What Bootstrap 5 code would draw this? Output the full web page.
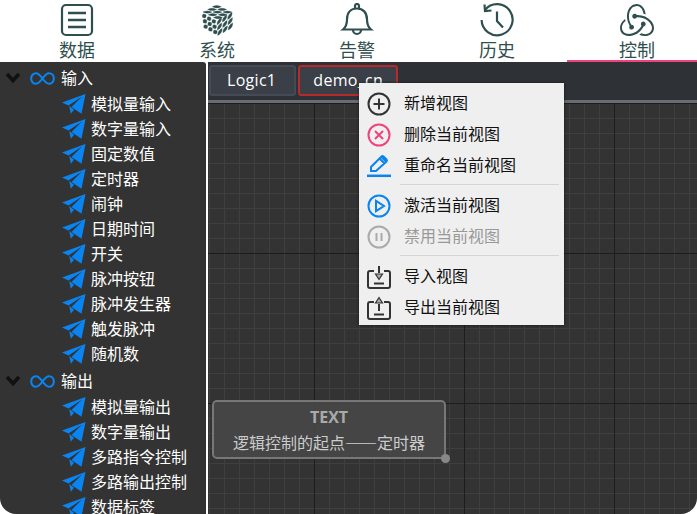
<!DOCTYPE html>
<html lang="zh">
<head>
<meta charset="utf-8">
<title>控制</title>
<link rel="stylesheet" href="https://cdn.jsdelivr.net/npm/bootstrap@5.3.0/dist/css/bootstrap.min.css">
<style>
html,body{height:100%;overflow:hidden;background:#fff}
body{font-family:"Open Sans","Noto Sans CJK SC",sans-serif}
.app-shell{width:697px;height:514px;overflow:hidden}
.top-nav{height:62px;flex:none;padding-left:7px;overflow:hidden}
.top-item{width:140px;flex:none;height:62px;color:#2f4f4f;font-size:18px;line-height:22px;padding-top:3px}
.top-item svg{width:34px;height:34px;display:block;margin-bottom:2px}
.top-item.on{box-shadow:inset 0 -2px 0 #f0437c}
.work-area{height:452px;border-radius:0 0 16px 16px;overflow:hidden}
.side-tree{width:206px;flex:none;background:#333;color:#fff;font-size:16px;line-height:25px;padding-top:2px;overflow:hidden;border-top-right-radius:3px}
.tree-row{height:25px;white-space:nowrap}
.tree-head{padding-left:5px;height:28px;padding-top:1px}
.tree-head .chev{width:16px;height:12px;margin-right:9px;margin-top:-1px}
.tree-head .loop{width:25px;height:13px;margin-right:6px;margin-top:-1px}
.tree-leaf{padding-left:62px}
.tree-leaf svg{width:24px;height:20px;margin-right:5px;flex:none;margin-top:-1px}
.split-line{width:2px;flex:none;background:#fff}
.main-pane{width:489px;min-width:0}
.tab-strip{height:41px;flex:none;background:#2e3136;padding:3px 0 0 1px;gap:2px;border-bottom:3px solid #6a6c70}
.view-tab{height:31px;padding:0 18px 0 16px;background:#3a3f48;border:2px solid #454b55;border-radius:3px;color:#fff;font-size:16px;line-height:27px;letter-spacing:.3px}
.view-tab.cur{border-color:#b52a2a;padding:0 13px}
.canvas-pane{background-color:#333;background-image:linear-gradient(#1d1d1d 1px,transparent 1px),linear-gradient(90deg,#1d1d1d 1px,transparent 1px),linear-gradient(#3f3f3f 1px,transparent 1px),linear-gradient(90deg,#3f3f3f 1px,transparent 1px);background-size:150px 150px,150px 150px,15px 15px,15px 15px;background-position:0 0,-44px 0,0 0,-44px 0}
.node-box{left:4px;top:297px;width:234px;height:59px;background:rgba(72,72,72,.88);border:2px solid #777;border-radius:5px;text-align:center;color:#ccc}
.node-title{font-size:16px;font-weight:700;line-height:20px;margin-top:5px;color:#aaa}
.node-text{font-family:"Noto Sans CJK SC",sans-serif;font-size:16px;line-height:20px;margin-top:5px}
.node-dot{right:-6px;bottom:-6px;width:9px;height:9px;border-radius:50%;background:#888}
.ctx-menu{left:359px;top:83px;width:205px;height:242px;background:#efefef;box-shadow:0 0 3px rgba(0,0,0,.55);padding-top:5px;font-size:16px;line-height:20px;color:#111;z-index:5}
.ctx-row{height:31px;padding-left:8px}
.ctx-row svg{width:24px;height:24px;margin-right:13px;flex:none}
.ctx-label{margin-top:-2px}
.ctx-row.off{color:#999}
.ctx-sep{height:1px;background:#d4d4d4;margin:3px 5px 5px 41px}
</style>
</head>
<body>
<svg width="0" height="0" class="d-block position-fixed">
<defs>
<symbol id="plane" viewBox="0 0 24 20"><path fill="#0a84f0" d="M23.500 0 0 8.500l6.500 3L20 2.500 9.500 13 19.500 19.800z"/><path fill="#0a84f0" d="M7.200 12 8.800 19.800l3.200-4z"/></symbol>
<symbol id="chev" viewBox="0 0 16 12"><path d="M2 2 8 8.500 14 2" fill="none" stroke="#111" stroke-width="3.600"/></symbol>
<symbol id="loop" viewBox="0 0 25 13"><path d="M12.500 6.500C10 3 8.300 1.300 6 1.300 3.200 1.300 1.200 3.600 1.200 6.500s2 5.200 4.800 5.200c2.300 0 4-1.700 6.500-5.200C15 3 16.700 1.300 19 1.300c2.800 0 4.800 2.300 4.800 5.200s-2 5.200-4.800 5.200c-2.300 0-4-1.700-6.500-5.200z" fill="none" stroke="#0a84f0" stroke-width="2.100"/></symbol>
<g id="leaves" fill="#2f4f4f" stroke="#2f4f4f" stroke-width=".06">
<path d="M.06.94Q.06.06.94.06.94.94.06.94z"/><path d="M1.060.94Q1.060.06 1.940.06 1.940.94 1.060.94z"/><path d="M2.060.94Q2.060.06 2.940.06 2.940.94 2.060.94z"/>
<path d="M.06 1.940Q.06 1.060.94 1.060.94 1.940.06 1.940z"/><path d="M1.060 1.940Q1.060 1.060 1.940 1.060 1.940 1.940 1.060 1.940z"/><path d="M2.060 1.940Q2.060 1.060 2.940 1.060 2.940 1.940 2.060 1.940z"/>
<path d="M.06 2.940Q.06 2.060.94 2.060.94 2.940.06 2.940z"/><path d="M1.060 2.940Q1.060 2.060 1.940 2.060 1.940 2.940 1.060 2.940z"/><path d="M2.060 2.940Q2.060 2.060 2.940 2.060 2.940 2.940 2.060 2.940z"/>
</g>
</defs>
</svg>
<div class="app-shell d-flex flex-column position-relative">
  <nav class="top-nav d-flex">
    <div class="top-item d-flex flex-column align-items-center"><svg viewBox="0 0 34 34" fill="none" stroke="#2f4f4f" stroke-width="2.200"><rect x="2" y="2" width="30" height="30" rx="4"/><path d="M8 10h18M8 17h18M8 24h18" stroke-width="2.400"/></svg>数据</div>
    <div class="top-item d-flex flex-column align-items-center"><svg viewBox="0 0 34 34"><use href="#leaves" transform="matrix(5.300 2.700 -4.700 2.700 16.500 1)"/><use href="#leaves" transform="matrix(4.800 2.700 .7 5.300 1.500 9)"/><use href="#leaves" transform="matrix(5.300 -2.700 .3 5.300 16.500 17)"/></svg>系统</div>
    <div class="top-item d-flex flex-column align-items-center"><svg viewBox="0 0 34 34" fill="none" stroke="#2f4f4f" stroke-width="2.200"><path d="M3 26.500c3-2.500 4-5 4-10 0-7 4-11 10-11s10 4 10 11c0 5 1 7.500 4 10z"/><path d="M15 5.500V3a2 2 0 0 1 4 0v2.500M13 27a4 4 0 0 0 8 0"/></svg>告警</div>
    <div class="top-item d-flex flex-column align-items-center"><svg viewBox="0 0 34 34" fill="none" stroke="#2f4f4f" stroke-width="2.200"><path d="M5 7A15.500 15.500 0 1 1 1.600 17"/><path d="M4.500 1.500 5 8l6.500-.5M17 8.500V18l6 6.500"/></svg>历史</div>
    <div class="top-item on d-flex flex-column align-items-center"><svg viewBox="0 0 24 24" fill="#2f4f4f"><path d="M16.634 16.504c.87-.075 1.543-.84 1.500-1.754-.047-.914-.796-1.648-1.709-1.648h-.061a1.710 1.710 0 00-1.648 1.769c.03.479.226.869.494 1.153-1.048 2.038-2.621 3.536-5.004 4.795-1.603.838-3.296 1.154-4.944.93-1.378-.195-2.456-.81-3.116-1.799-.988-1.499-1.078-3.116-.255-4.734.6-1.170 1.499-2.023 2.099-2.443a9.960 9.960 0 01-.42-1.543C-.868 14.408-.416 18.752.932 20.805c1.004 1.498 3.057 2.456 5.304 2.456.6 0 1.230-.044 1.843-.194 3.897-.749 6.848-3.086 8.541-6.532zm5.348-3.746c-2.320-2.728-5.738-4.226-9.634-4.226h-.51c-.253-.554-.837-.899-1.498-.899h-.045c-.943 0-1.678.81-1.647 1.753.03.898.794 1.648 1.708 1.648h.06a1.690 1.690 0 001.499-1.049h.555c2.309 0 4.495.674 6.488 1.992 1.527 1.005 2.622 2.323 3.237 3.897.538 1.288.509 2.547-.045 3.597-.855 1.647-2.294 2.517-4.196 2.517-1.199 0-2.367-.375-2.967-.644-.36.298-.96.793-1.394 1.093 1.318.598 2.652.943 3.940.943 2.922 0 5.094-1.647 5.919-3.236.898-1.798.824-4.824-1.470-7.416zM6.490 17.042c.03.899.793 1.648 1.708 1.648h.06a1.688 1.688 0 001.648-1.768c0-.9-.779-1.647-1.693-1.647h-.06c-.06 0-.15 0-.226.029-1.243-2.098-1.768-4.347-1.572-6.772.12-1.828.72-3.417 1.797-4.736.9-1.124 2.593-1.680 3.747-1.708 3.236-.06 4.585 3.971 4.689 5.574.4.09 1.070.3 1.520.45-.36-4.915-3.400-7.462-6.300-7.462-2.716 0-5.224 1.964-6.224 4.854-1.394 3.857-.48 7.567 1.214 10.490a1.400 1.400 0 00-.18.898z"/></svg>控制</div>
  </nav>
  <div class="work-area d-flex flex-grow-1">
    <aside class="side-tree">
      <div class="tree-row tree-head d-flex align-items-center"><svg class="chev"><use href="#chev"/></svg><svg class="loop"><use href="#loop"/></svg>输入</div>
      <div class="tree-row tree-leaf d-flex align-items-center"><svg><use href="#plane"/></svg>模拟量输入</div>
      <div class="tree-row tree-leaf d-flex align-items-center"><svg><use href="#plane"/></svg>数字量输入</div>
      <div class="tree-row tree-leaf d-flex align-items-center"><svg><use href="#plane"/></svg>固定数值</div>
      <div class="tree-row tree-leaf d-flex align-items-center"><svg><use href="#plane"/></svg>定时器</div>
      <div class="tree-row tree-leaf d-flex align-items-center"><svg><use href="#plane"/></svg>闹钟</div>
      <div class="tree-row tree-leaf d-flex align-items-center"><svg><use href="#plane"/></svg>日期时间</div>
      <div class="tree-row tree-leaf d-flex align-items-center"><svg><use href="#plane"/></svg>开关</div>
      <div class="tree-row tree-leaf d-flex align-items-center"><svg><use href="#plane"/></svg>脉冲按钮</div>
      <div class="tree-row tree-leaf d-flex align-items-center"><svg><use href="#plane"/></svg>脉冲发生器</div>
      <div class="tree-row tree-leaf d-flex align-items-center"><svg><use href="#plane"/></svg>触发脉冲</div>
      <div class="tree-row tree-leaf d-flex align-items-center"><svg><use href="#plane"/></svg>随机数</div>
      <div class="tree-row tree-head d-flex align-items-center"><svg class="chev"><use href="#chev"/></svg><svg class="loop"><use href="#loop"/></svg>输出</div>
      <div class="tree-row tree-leaf d-flex align-items-center"><svg><use href="#plane"/></svg>模拟量输出</div>
      <div class="tree-row tree-leaf d-flex align-items-center"><svg><use href="#plane"/></svg>数字量输出</div>
      <div class="tree-row tree-leaf d-flex align-items-center"><svg><use href="#plane"/></svg>多路指令控制</div>
      <div class="tree-row tree-leaf d-flex align-items-center"><svg><use href="#plane"/></svg>多路输出控制</div>
      <div class="tree-row tree-leaf d-flex align-items-center"><svg><use href="#plane"/></svg>数据标签</div>
    </aside>
    <div class="split-line"></div>
    <div class="main-pane d-flex flex-column">
      <div class="tab-strip d-flex">
        <div class="view-tab">Logic1</div>
        <div class="view-tab cur">demo_cn</div>
      </div>
      <div class="canvas-pane flex-grow-1 position-relative">
        <div class="node-box position-absolute">
          <div class="node-title">TEXT</div>
          <div class="node-text">逻辑控制的起点——定时器</div>
          <span class="node-dot position-absolute"></span>
        </div>
      </div>
    </div>
  </div>
  <div class="ctx-menu position-absolute">
    <div class="ctx-row d-flex align-items-center"><svg viewBox="0 0 24 24" fill="none" stroke="#333" stroke-width="2"><circle cx="12" cy="12" r="10.500"/><path d="M6.500 12h11M12 6.500v11"/></svg><span class="ctx-label">新增视图</span></div>
    <div class="ctx-row d-flex align-items-center"><svg viewBox="0 0 24 24" fill="none" stroke="#f0437c" stroke-width="2"><circle cx="12" cy="12" r="10.500"/><path d="M8 8l8 8M16 8l-8 8"/></svg><span class="ctx-label">删除当前视图</span></div>
    <div class="ctx-row d-flex align-items-center"><svg viewBox="0 0 24 24" fill="none" stroke="#0a84f0" stroke-width="2"><path d="M4 17V13L14.500 2.500a1.500 1.500 0 0 1 2 0l3 3a1.500 1.500 0 0 1 0 2L9 17zM12.500 4.500l5 5"/><path d="M13.500 3.500l1-1a1.500 1.500 0 0 1 2 0l3 3a1.500 1.500 0 0 1 0 2l-1 1z" fill="#0a84f0" stroke="none"/><path d="M0 21.800h24" stroke-width="2.500"/></svg><span class="ctx-label">重命名当前视图</span></div>
    <div class="ctx-sep"></div>
    <div class="ctx-row d-flex align-items-center"><svg viewBox="0 0 24 24" fill="none" stroke="#0a84f0" stroke-width="2"><circle cx="12" cy="12" r="10.500"/><path d="M9 6.800 17 12 9 17.200z"/></svg><span class="ctx-label">激活当前视图</span></div>
    <div class="ctx-row off d-flex align-items-center"><svg viewBox="0 0 24 24" fill="none" stroke="#aaa" stroke-width="2"><circle cx="12" cy="12" r="10.500"/><path d="M9.500 8v8M14.500 8v8"/></svg><span class="ctx-label">禁用当前视图</span></div>
    <div class="ctx-sep"></div>
    <div class="ctx-row d-flex align-items-center"><svg viewBox="0 0 24 24" fill="none" stroke="#333" stroke-width="2"><path d="M7 6H3a2 2 0 0 0-2 2v13a2 2 0 0 0 2 2h18a2 2 0 0 0 2-2V8a2 2 0 0 0-2-2h-4M7 18.500h10M12 1v7"/><path d="M8.500 9h7L12 14.500z" stroke-width="1.200" fill="#aaa"/></svg><span class="ctx-label">导入视图</span></div>
    <div class="ctx-row d-flex align-items-center"><svg viewBox="0 0 24 24" fill="none" stroke="#333" stroke-width="2"><path d="M7 6H3a2 2 0 0 0-2 2v13a2 2 0 0 0 2 2h18a2 2 0 0 0 2-2V8a2 2 0 0 0-2-2h-4M7 18.500h10M12 8v7"/><path d="M8.500 7h7L12 1.500z" stroke-width="1.200" fill="#aaa"/></svg><span class="ctx-label">导出当前视图</span></div>
  </div>
</div>
<script src="https://cdn.jsdelivr.net/npm/bootstrap@5.3.0/dist/js/bootstrap.bundle.min.js"></script>
</body>
</html>
